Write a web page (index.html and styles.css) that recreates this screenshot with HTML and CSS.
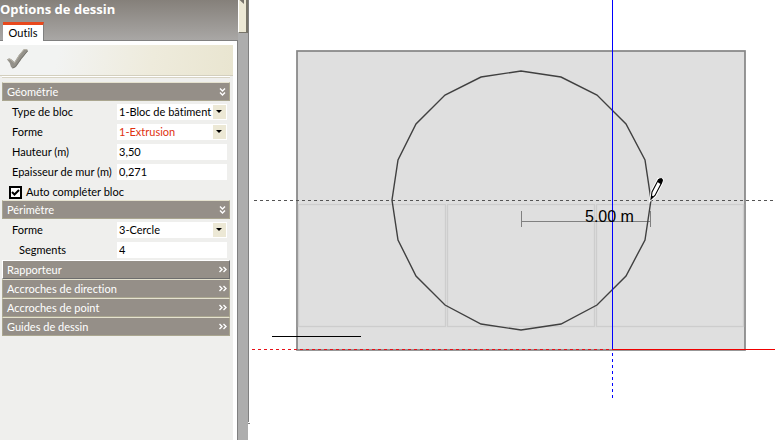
FILE: index.html
```html
<!DOCTYPE html>
<html lang="fr">
<head>
<meta charset="utf-8">
<title>Options de dessin</title>
<link rel="stylesheet" href="styles.css">
</head>
<body>
<svg class="defs" aria-hidden="true">
  <symbol id="chev-down" viewBox="0 0 8 8"><path d="M1 0.5 3.5 3 6 0.5M1 4.5 3.5 7 6 4.5"/></symbol>
  <symbol id="chev-right" viewBox="0 0 8 8"><path d="M0.5 1 3 3.5 0.5 6M4.5 1 7 3.5 4.5 6"/></symbol>
</svg>
<div class="app">
  <aside class="side">
    <header class="head">
      <h1 class="title">Options de dessin</h1>
      <button class="tab" type="button">Outils</button>
    </header>
    <div class="panel">
      <div class="body">
        <div class="toolbar">
          <button class="apply" type="button" aria-label="Valider">
            <svg width="22" height="22" viewBox="0 0 22 22"><path d="M0 11.500Q2 10 4 11L7.500 14Q12 6 17 1L20 1 21 3Q15 10 9 19L6 20.500 4 19Q3 14 0 11.500Z" fill="#94918a"/><path d="M0.500 11.500 3 11 7.500 15Q12 7 17 1.500L20 1.500" fill="none" stroke="#b5b1a5"/><path d="M5.500 20 8.500 18.500Q14 10 20.500 3" fill="none" stroke="#77756f"/></svg>
          </button>
        </div>
        <form class="groups">
          <button class="bar" type="button">Géométrie<svg class="chev"><use href="#chev-down"/></svg></button>
          <div class="rows">
            <div class="row"><label for="type">Type de bloc</label><span class="pick"><select id="type"><option>1-Bloc de bâtiment</option></select></span></div>
            <div class="row"><label for="forme">Forme</label><span class="pick"><select id="forme" class="hot"><option>1-Extrusion</option></select></span></div>
            <div class="row"><label for="haut">Hauteur (m)</label><input class="field" id="haut" type="text" value="3,50"></div>
            <div class="row"><label for="mur">Epaisseur de mur (m)</label><input class="field" id="mur" type="text" value="0,271"></div>
            <label class="check"><span class="tick"><input type="checkbox" checked><svg viewBox="0 0 9 9"><path d="M1 4 3.500 6.500 8 2" /></svg></span>Auto compléter bloc</label>
          </div>
          <button class="bar" type="button">Périmètre<svg class="chev"><use href="#chev-down"/></svg></button>
          <div class="rows">
            <div class="row"><label for="per">Forme</label><span class="pick"><select id="per"><option>3-Cercle</option></select></span></div>
            <div class="row sub"><label for="seg">Segments</label><input class="field" id="seg" type="text" value="4"></div>
          </div>
          <button class="bar raised" type="button">Rapporteur<svg class="chev"><use href="#chev-right"/></svg></button>
          <button class="bar" type="button">Accroches de direction<svg class="chev"><use href="#chev-right"/></svg></button>
          <button class="bar" type="button">Accroches de point<svg class="chev"><use href="#chev-right"/></svg></button>
          <button class="bar" type="button">Guides de dessin<svg class="chev"><use href="#chev-right"/></svg></button>
        </form>
      </div>
    </div>
  </aside>
  <div class="split"><button class="fold" type="button" aria-label="Replier"><svg width="5" height="9" viewBox="0 0 5 9"><path d="M5 0V9L0 4.500Z" fill="#77736b"/></svg></button></div>
  <main class="stage">
    <svg class="draw" role="img" aria-label="Plan">
      <g transform="translate(-248 0)">
        <rect x="297" y="51" width="448" height="299" fill="#dfdfdf" stroke="#858585" stroke-width="1.700"/>
        <g fill="none" stroke="#cdcdcd" stroke-width="1.300">
          <rect x="298.500" y="204.500" width="147" height="122"/>
          <rect x="447.500" y="204.500" width="147" height="122"/>
          <rect x="596.500" y="204.500" width="147" height="122"/>
        </g>
        <path d="M254 200.500H775" stroke="#555" stroke-dasharray="3 3"/>
        <path d="M272 336.500H361" stroke="#000"/>
        <path d="M252 349.500H612" stroke="#e81018" stroke-dasharray="3 3"/>
        <path d="M612 349.500H2600" stroke="#f00000"/>
        <path d="M248 423.500H250" stroke="#808080"/>
        <path d="M521.500 211V227M650.500 211V227M521.500 221.500H650" stroke="#808080"/>
        <polygon points="651,200 645,240 626,276 597,305 561,324 521,330 481,324 445,305 416,276 398,240 392,200 398,160 416,124 445,95 481,77 521,71 561,77 597,95 626,124 645,160" fill="none" stroke="#404040" stroke-width="1.400"/>
        <path d="M612.500 0V349" stroke="#00f"/>
        <path d="M612.500 353V398" stroke="#00f" stroke-dasharray="3 3"/>
        <text x="585" y="222" class="dim">5.00 m</text>
        <path d="M651 199 652 192 658.500 179.500 662 180 661.500 183 655 195.500Z" fill="#fff" stroke="#fff" stroke-width="3"/>
        <path d="M651 199 652 192 658.500 179.500 662 180 661.500 183 655 195.500Z" fill="#fff" stroke="#000" stroke-width="1.100"/>
        <path d="M657.500 182 659 178.500 661.500 178 663 180 662 183 660.500 184Z M651 199.500V195L653.500 196.500Z" fill="#000"/>
      </g>
    </svg>
  </main>
</div>
</body>
</html>
```
FILE: styles.css
```css
* { box-sizing: border-box; }
html, body { height: 100%; }
body { margin: 0; background: #fff; color: #000; font: 11px/14px Lato, "Liberation Sans", sans-serif; font-variant-ligatures: none; }
button, input, select { margin: 0; padding: 0; border: 0; border-radius: 0; font: inherit; font-variant-ligatures: none; color: inherit; background: none; }
.defs { display: none; }
.app { display: flex; min-height: 100%; }
.side { display: flex; flex-direction: column; flex: 0 0 238px; }
.head { display: flex; flex-direction: column; align-items: flex-start; background: linear-gradient(#85807a, #a9a7a5); border-bottom: 1px solid #808080; }
.title { margin: 0; padding: 1px 0 5px; font: bold 13px/16px "Open Sans", "DejaVu Sans", sans-serif; color: #fff; }
.tab { margin-left: 3px; margin-bottom: -1px; width: 41px; height: 19px; padding-bottom: 1px; border-top: 3px solid #e8481c; border-right: 1px solid #808080; background: #fff; }
.panel { flex: 1; display: flex; padding: 4px 4px 0 0; border-right: 1px solid #808080; background: #fff; }
.body { flex: 1; background: #efefed; }
.toolbar { height: 31px; background: linear-gradient(100deg, #f2f3f2 25%, #eeebdc 65%, #e9e5d0); border-bottom: 1px solid #d3cfbe; }
.apply { display: block; padding: 3px 7px; }
.apply svg { display: block; }
.groups { margin: 1px 3px 0 2px; padding-top: 5px; box-shadow: 0 -1px #fff, inset 0 1px #d8d4c4; }
.bar { display: flex; align-items: center; justify-content: space-between; width: 100%; height: 19px; padding: 1px 2px 0 4px; border: 1px solid #aaa690; border-top-color: #e5e2cf; background: #958f88; color: #fff; }
.raised { border-color: #fff #6d6d6d #6d6d6d #fff; }
.chev { width: 8px; height: 8px; fill: none; stroke: #fff; stroke-width: 1.400; }
.rows { padding: 3px 3px 0 10px; }
.row { display: flex; justify-content: space-between; height: 20px; line-height: 15px; white-space: nowrap; }
.sub { height: 18px; }
.sub label { padding-left: 7px; }
.field, .pick { width: 110px; height: 16px; background: #fff; }
.field { padding: 0 2px 2px; }
.pick { position: relative; }
.pick select { display: block; width: 100%; height: 14px; padding: 0 14px 0 2px; appearance: none; }
.pick::before { content: ""; position: absolute; right: 1px; top: 1px; width: 13px; height: 14px; background: #ece8d5; pointer-events: none; }
.pick::after { content: ""; position: absolute; right: 5px; top: 6px; border: solid transparent; border-width: 3px 3px 0; border-top-color: #000; pointer-events: none; }
.pick .hot { color: #e03210; }
.check { display: flex; align-items: center; gap: 4px; height: 16px; margin-left: -3px; }
.tick { position: relative; width: 13px; height: 13px; }
.tick input { display: block; width: 13px; height: 13px; appearance: none; border: 2px solid #000; background: #fff; }
.tick svg { position: absolute; left: 2px; top: 2px; width: 9px; height: 9px; fill: none; stroke: #000; stroke-width: 2; pointer-events: none; }
.split { flex: 0 0 10px; background: #adadad; }
.fold { display: flex; align-items: flex-start; justify-content: flex-end; width: 10px; height: 33px; padding-right: 2px; border-left: 1px solid #fff; border-right: 2px solid #777469; border-bottom: 1px solid #777469; background: #ece8d5; }
.fold svg { margin-top: -5px; }
.stage { flex: 1; display: flex; min-width: 0; }
.stage::before { content: ""; width: 1px; height: 422px; margin-right: -1px; background: #808080; }
.draw { flex: 1; min-width: 0; }
.dim { font: 16px "Liberation Sans", Arial, sans-serif; }
```
